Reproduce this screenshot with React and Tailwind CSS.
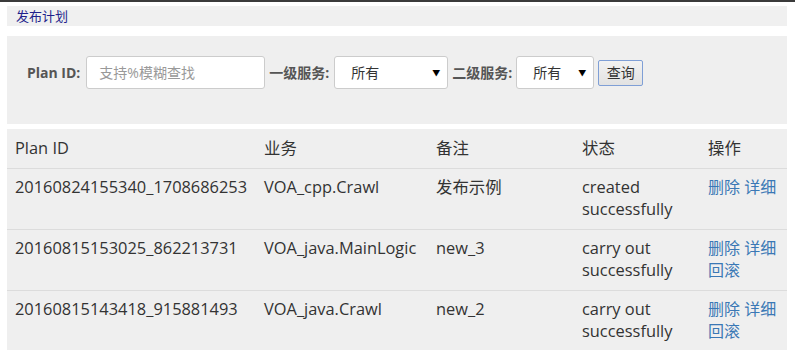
import React from 'react';

const font = { fontFamily: '"Open Sans", "Noto Sans CJK SC", sans-serif' };

const rows = [
  { id: '20160824155340_1708686253', biz: 'VOA_cpp.Crawl', note: '发布示例', status: ['created', 'successfully'], rollback: false },
  { id: '20160815153025_862213731', biz: 'VOA_java.MainLogic', note: 'new_3', status: ['carry out', 'successfully'], rollback: true },
  { id: '20160815143418_915881493', biz: 'VOA_java.Crawl', note: 'new_2', status: ['carry out', 'successfully'], rollback: true },
];

const FakeSelect = ({ width }) => (
  <div className={`${width} h-[33px] bg-white border border-[#ccc] rounded-[3px] flex items-center justify-between pl-[16px] pr-[7px] text-[14px] text-[#333]`}>
    <span>所有</span>
    <span className="text-[8px] text-black">▼</span>
  </div>
);

export default function App() {
  return (
    <div className="w-[812px] h-[350px] bg-white overflow-hidden text-[#333]" style={font}>
      <div className="w-[795px] h-[2px] bg-[#3a3a3a]" />

      {/* breadcrumb */}
      <div className="ml-[7px] mt-[4px] w-[780px] h-[20px] bg-[#f0f0f0] pl-[9px] text-[13px] leading-[20px] text-[#1f1f8c]">
        发布计划
      </div>

      {/* filter panel */}
      <div className="ml-[7px] mt-[10px] w-[780px] h-[88px] bg-[#efefef] pt-[20px] pl-[20px] flex items-start">
        <div className="flex items-center h-[33px]">
          <span className="text-[14px] font-bold text-[#555] mr-[6px]">Plan ID:</span>
          <div className="w-[179px] h-[33px] bg-white border border-[#ccc] rounded-[3px] flex items-center pl-[12px] text-[14px] text-[#999]">
            支持%模糊查找
          </div>
          <span className="text-[14px] font-bold text-[#555] ml-[4px] mr-[5px]">一级服务:</span>
          <FakeSelect width="w-[114px]" />
          <span className="text-[14px] font-bold text-[#555] ml-[4px] mr-[4px]">二级服务:</span>
          <FakeSelect width="w-[78px]" />
          <button className="ml-[4px] w-[45px] h-[26px] border border-[#7f9fd6] rounded-[2px] bg-gradient-to-b from-[#f2f2f2] to-[#e2e2e2] text-[14px] text-[#333]">
            查询
          </button>
        </div>
      </div>

      {/* table */}
      <div className="ml-[7px] mt-[5px] w-[780px] bg-[#efefef] text-[16.4px]">
        <div className="grid grid-cols-[249px_172px_146px_126px_87px] h-[40px] items-center border-b border-[#dcdcdc]">
          <div className="pl-[8px]">Plan ID</div>
          <div className="pl-[8px]">业务</div>
          <div className="pl-[8px]">备注</div>
          <div className="pl-[8px]">状态</div>
          <div className="pl-[8px]">操作</div>
        </div>
        {rows.map((r) => (
          <div key={r.id} className="grid grid-cols-[249px_172px_146px_126px_87px] h-[61px] pt-[7px] leading-[22px] border-b border-[#dcdcdc]">
            <div className="pl-[8px]">{r.id}</div>
            <div className="pl-[8px]">{r.biz}</div>
            <div className="pl-[8px]">{r.note}</div>
            <div className="pl-[8px]">
              <div>{r.status[0]}</div>
              <div>{r.status[1]}</div>
            </div>
            <div className="pl-[8px] text-[16px] text-[#3a78b5]">
              <div>删除 详细</div>
              {r.rollback && <div>回滚</div>}
            </div>
          </div>
        ))}
      </div>
    </div>
  );
}
